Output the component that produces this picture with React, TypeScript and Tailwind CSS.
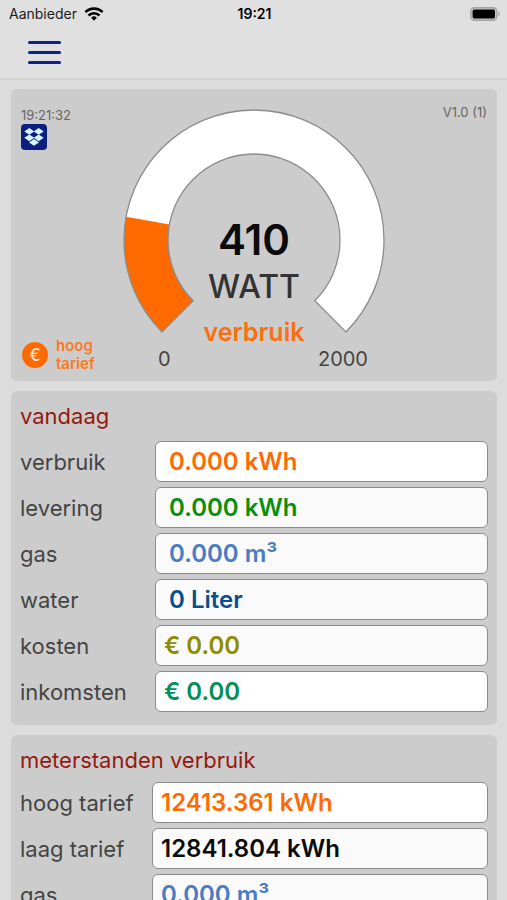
import React from 'react';

interface Reading {
  id: string;
  label: string;
  value: string;
  color: string;
  shade: string;
  pad: string;
}

const today: Reading[] = [
  { id: 'verbruik', label: 'verbruik', value: '0.000 kWh', color: 'text-[#ff6a00]', shade: 'bg-white', pad: 'px-[13px]' },
  { id: 'levering', label: 'levering', value: '0.000 kWh', color: 'text-[#0a8f0a]', shade: 'bg-[#fafafa]', pad: 'px-[13px]' },
  { id: 'gas', label: 'gas', value: '0.000 m³', color: 'text-[#4a7bc4]', shade: 'bg-[#fafafa]', pad: 'px-[13px]' },
  { id: 'water', label: 'water', value: '0 Liter', color: 'text-[#06508f]', shade: 'bg-[#fafafa]', pad: 'px-[13px]' },
  { id: 'kosten', label: 'kosten', value: '€ 0.00', color: 'text-[#8f8c00]', shade: 'bg-[#fafafa]', pad: 'px-2' },
  { id: 'inkomsten', label: 'inkomsten', value: '€ 0.00', color: 'text-[#04905a]', shade: 'bg-white', pad: 'px-2' },
];

const meters: Reading[] = [
  { id: 'hoog', label: 'hoog tarief', value: '12413.361 kWh', color: 'text-[#ff6a00]', shade: 'bg-white', pad: 'px-2' },
  { id: 'laag', label: 'laag tarief', value: '12841.804 kWh', color: 'text-[#0b0b0b]', shade: 'bg-[#fafafa]', pad: 'px-2' },
  { id: 'gas-meter', label: 'gas', value: '0.000 m³', color: 'text-[#4a7bc4]', shade: 'bg-[#fafafa]', pad: 'px-2' },
];

const MAX_WATT = 2000;

// ring segment between two fractions of the 270 degree dial
const segment = (from: number, to: number) => {
  const point = (f: number, r: number) => {
    const a = ((135 + f * 270) * Math.PI) / 180;
    return `${(131 + r * Math.cos(a)).toFixed(2)} ${(131 + r * Math.sin(a)).toFixed(2)}`;
  };
  const large = (to - from) * 270 > 180 ? 1 : 0;
  return `M${point(from, 130)}A130 130 0 ${large} 1 ${point(to, 130)}L${point(to, 86)}A86 86 0 ${large} 0 ${point(from, 86)}Z`;
};

const StatusBar = () => (
  <div className="grid h-[27px] grid-cols-3 items-center pl-[9px] pr-[7px] text-[14px] text-[#1c1c1c]">
    <div className="flex items-center gap-[7px]">
      <span>Aanbieder</span>
      <svg viewBox="0 0 20 14" className="h-[14px] w-5" fill="none" stroke="#000" strokeWidth="2.6">
        <path d="M1.400 5.200a12.200 12.200 0 0 1 17.200 0" />
        <path d="M4.500 8.500a7.800 7.800 0 0 1 11 0" />
        <path d="M10 13.700l-2.900-2.900a4.100 4.100 0 0 1 5.800 0z" fill="#000" stroke="none" />
      </svg>
    </div>
    <span className="text-center font-semibold text-black">19:21</span>
    <svg viewBox="0 0 30 14" className="h-[14px] w-[30px] justify-self-end" aria-label="Batterij">
      <rect x="0.8" y="0.8" width="26" height="12.4" rx="3.6" fill="#c8c8c8" stroke="#a4a4a4" strokeWidth="1.4" />
      <rect x="2.6" y="2.6" width="22.4" height="8.8" rx="1.6" fill="#000" />
      <path d="M28.300 4.800c2 .6 2 3.800 0 4.400z" fill="#a4a4a4" />
    </svg>
  </div>
);

const Gauge = ({ watt }: { watt: number }) => (
  <div className="mx-auto flex w-[262px] flex-col">
    <div className="grid">
      <svg viewBox="0 0 262 226" className="col-start-1 row-start-1 h-[226px] w-[262px]">
        <path d={segment(0, 1)} fill="#fff" />
        <path d={segment(0, watt / MAX_WATT)} fill="#ff6a00" />
        <path d={segment(0, 1)} fill="none" stroke="#8c8c8c" strokeWidth="1.3" />
      </svg>
      <div className="col-start-1 row-start-1 flex flex-col items-center pt-[107px]">
        <span className="text-[42px] font-semibold leading-[48px] text-[#0b0b0b]">{watt}</span>
        <span className="text-[32px] font-medium leading-[46px] text-[#333]">WATT</span>
        <span className="pt-[7px] text-[25px] font-semibold leading-[30px] text-[#fb6f0c]">verbruik</span>
      </div>
    </div>
    <div className="flex justify-between pl-[35px] pr-[17px] text-[20px] leading-6 text-[#444]">
      <span>0</span>
      <span>{MAX_WATT}</span>
    </div>
  </div>
);

interface ReadingCardProps {
  title: string;
  readings: Reading[];
  columns: string;
  spacing: string;
}

const ReadingCard = ({ title, readings, columns, spacing }: ReadingCardProps) => (
  <section className="shrink-0 rounded-md bg-[#ccc] px-[9px] pb-[13px] pt-2">
    <h2 className={`text-[22px] leading-[34px] text-[#951910] ${spacing}`}>{title}</h2>
    <div className="flex flex-col gap-[5px]">
      {readings.map((r) => (
        <div key={r.id} className={`grid items-center ${columns}`}>
          <label htmlFor={r.id} className="text-[22px] leading-8 text-[#444]">
            {r.label}
          </label>
          <input
            id={r.id}
            readOnly
            value={r.value}
            className={`h-[41px] w-full min-w-0 rounded-md border border-[#8c8c8c] text-[24px] font-semibold outline-none ${r.pad} ${r.shade} ${r.color}`}
          />
        </div>
      ))}
    </div>
  </section>
);

export default function App() {
  return (
    <div className="flex h-screen flex-col bg-[#dcdcdc] font-['Inter','Liberation_Sans',sans-serif]">
      <header className="shrink-0 border-b-2 border-[#d2d2d2] bg-[#e0e0e0]">
        <StatusBar />
        <nav className="flex h-[51px] items-center pb-px pl-[28px]">
          <button type="button" aria-label="Menu" className="flex flex-col gap-[7px]">
            <span className="h-[3px] w-[33px] rounded-full bg-[#10218a]" />
            <span className="h-[3px] w-[33px] rounded-full bg-[#10218a]" />
            <span className="h-[3px] w-[33px] rounded-full bg-[#10218a]" />
          </button>
        </nav>
      </header>

      <main className="flex min-h-0 flex-1 flex-col gap-[10px] overflow-y-auto pl-[11px] pr-[10px] pt-[9px] [scrollbar-width:none]">
        <section className="relative shrink-0 rounded-md bg-[#ccc] pb-[10px] pt-5">
          <div className="absolute left-[10px] top-[18px] flex flex-col gap-px text-[13px] leading-4 text-[#666]">
            <span>19:21:32</span>
            <svg viewBox="0 0 26 26" className="h-[26px] w-[26px]" aria-label="Dropbox">
              <rect width="26" height="26" rx="4" fill="#0b1f80" />
              <g fill="#d8f4ff">
                <path d="M8.300 4l5 3.400-5 3.400-5-3.400z" />
                <path d="M17.700 4l5 3.400-5 3.400-5-3.400z" />
                <path d="M8.300 10.400l5 3.400-5 3.400-5-3.400z" />
                <path d="M17.700 10.400l5 3.400-5 3.400-5-3.400z" />
                <path d="M13 15l5 3.400-5 3.400-5-3.400z" />
              </g>
            </svg>
          </div>
          <span className="absolute right-[10px] top-[15px] text-[13px] leading-4 text-[#666]">V1.0 (1)</span>
          <Gauge watt={410} />
          <div className="absolute bottom-2 left-[11px] flex items-center gap-2 text-[15px] font-semibold leading-[18px] text-[#fb7a1e]">
            <span className="flex h-[26px] w-[26px] items-center justify-center rounded-full bg-[#ff6a00] text-[17px] font-medium text-[#ffe0c8]">
              €
            </span>
            <span className="flex flex-col">
              <span>hoog</span>
              <span>tarief</span>
            </span>
          </div>
        </section>

        <ReadingCard title="vandaag" readings={today} columns="grid-cols-[135px_1fr]" spacing="mb-2" />
        <ReadingCard title="meterstanden verbruik" readings={meters} columns="grid-cols-[132px_1fr]" spacing="mb-[5px]" />
      </main>
    </div>
  );
}
